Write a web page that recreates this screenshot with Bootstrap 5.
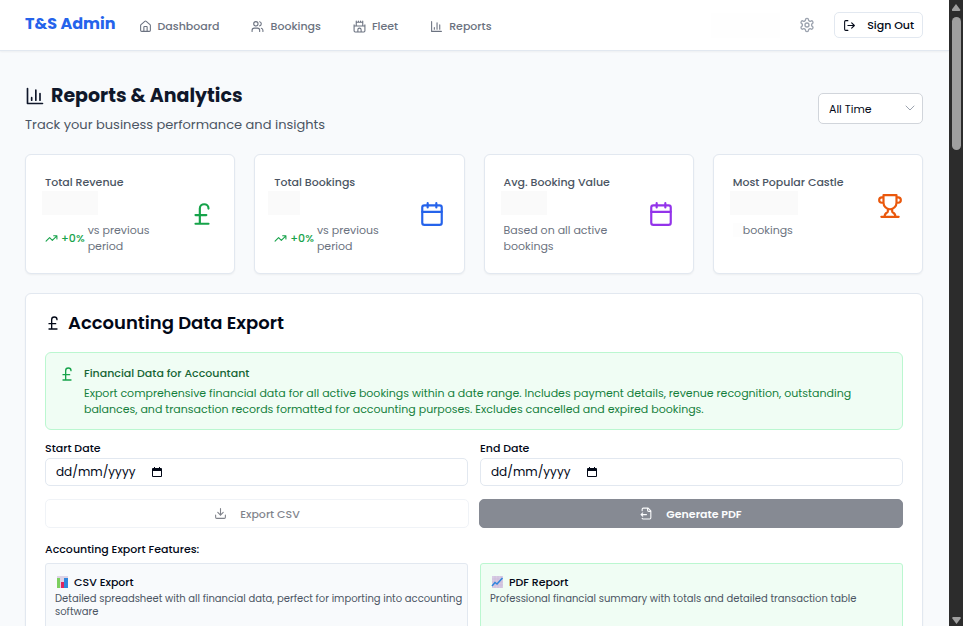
<!DOCTYPE html>
<html lang="en-GB">
<head>
<meta charset="utf-8">
<meta name="viewport" content="width=device-width, initial-scale=1">
<title>T&amp;S Admin – Reports &amp; Analytics</title>
<link href="https://cdn.jsdelivr.net/npm/bootstrap@5.3.0/dist/css/bootstrap.min.css" rel="stylesheet">
<style>
  body { font-family: Poppins, Inter, "Open Sans", sans-serif; font-size: 11px; line-height: 16px; color: #020817; background: #f8fafc; }
  .ico { width: 13px; height: 13px; flex: none; fill: none; stroke: currentColor; stroke-width: 2; stroke-linecap: round; stroke-linejoin: round; }
  .ico-16 { width: 16px; height: 16px; }
  .ico-20 { width: 20px; height: 20px; }
  .ico-26 { width: 26px; height: 26px; }
  .page-x { padding-left: 25px; padding-right: 26px; }
  .topbar { height: 51px; border-bottom: 1px solid #e2e8f0; box-shadow: 0 1px 2px rgba(0,0,0,.05); }
  .brand { font-size: 16px; line-height: 24px; color: #2563eb; padding-bottom: 3px; margin-right: 23px; }
  .menu { gap: 32px; padding-top: 2px; }
  .menu a { gap: 6px; color: #6b7280; }
  .account { gap: 19px; }
  .gear { color: #9ca3af; }
  .btn-plain { border: 1px solid #e2e8f0; background: #fff; font-size: 11px; line-height: 16px; padding: 4px 8px; border-radius: 5px; gap: 11px; color: #020817; }
  .hidden-value { background: #fafafa; height: 24px; width: 56px; margin: 1px 0 7px -3px; }
  .hidden-sm { width: 32px; margin-left: -6px; }
  .hidden-md { width: 46px; }
  .hidden-lg { width: 68px; }
  .hidden-count { width: 10px; height: 14px; background: #fdfdfd; }
  .hidden-user { width: 69px; height: 25px; background: #fefefe; }
  .headline { padding-top: 30px; padding-bottom: 19px; }
  .headline-text { padding-top: 2px; }
  .page-title { font-size: 19px; line-height: 26px; gap: 6px; color: #0f172a; }
  .subtitle { font-size: 13px; line-height: 20px; margin-top: 6px; color: #4b5563; }
  .period { width: 105px; height: 31px; font-size: 11px; line-height: 16px; padding: 6px 24px 4px 10px; border: 1px solid #d1d5db; border-radius: 5px; color: #020817; background-size: 12px 12px; background-position: right 6px center;
    background-image: url("data:image/svg+xml,%3Csvg xmlns='http://www.w3.org/2000/svg' viewBox='0 0 24 24' fill='none' stroke='%239ca3af' stroke-width='2' stroke-linecap='round' stroke-linejoin='round'%3E%3Cpath d='m4 8 8 8 8-8'/%3E%3C/svg%3E"); }
  .stats { display: grid; grid-template-columns: repeat(4, 1fr); gap: 19px; }
  .panel { background: #fff; border: 1px solid #e2e8f0; border-radius: 6px; box-shadow: 0 1px 2px rgba(0,0,0,.05); padding: 19px; }
  .stats .panel { column-gap: 12px; }
  .stat-label { color: #4b5563; }
  .muted { color: #6b7280; }
  .trend { gap: 3px; }
  .up { color: #16a34a; gap: 3px; }
  .c-green { color: #16a34a; } .c-blue { color: #2563eb; } .c-purple { color: #9333ea; } .c-orange { color: #ea580c; }
  .export { margin-top: 19px; }
  .section-title { font-size: 18px; line-height: 20px; gap: 7px; }
  .notice { background: #f0fdf4; border: 1px solid #bbf7d0; border-radius: 6px; padding: 12px 13px; margin-top: 19px; gap: 9px; color: #15803d; }
  .notice-icon { margin-top: 1px; }
  .notice h3 { color: #166534; font-size: 11px; line-height: 16px; margin: 0 0 4px; }
  .pair { display: grid; grid-template-columns: 1fr 1fr; gap: 12px; }
  .fields { margin-top: 10px; }
  .date-box { height: 28px; border: 1px solid #e2e8f0; border-radius: 5px; background: #fff; padding: 0 10px; margin-top: 2px; }
  .date-box input { width: 96px; border: 0; padding: 0; font-size: 12px; line-height: 18px; color: #020817; background: none; outline: 0; }
  .date-box input::placeholder { color: #020817; opacity: 1; }
  .date-box button { border: 0; padding: 0; background: none; line-height: 0; color: #020817; }
  .actions { gap: 10px; margin-top: 13px; }
  .act { height: 29px; font-size: 11px; line-height: 16px; border-radius: 5px; gap: 13px; padding: 0 8px; }
  .act:disabled { opacity: .5; }
  .act-light, .act-light:disabled { border: 1px solid #e2e8f0; background: #fff; color: #020817; }
  .act-dark, .act-dark:disabled { background: #0f172a; border-color: #0f172a; color: #f8fafc; }
  .sub-head { font-size: 11px; line-height: 16px; margin: 13px 0 6px; }
  .feature { border: 1px solid #e2e8f0; border-radius: 3px; background: #f8fafc; padding: 10px 4px 10px 9px; min-height: 90px; }
  .feature-green { border-color: #bbf7d0; background: #f0fdf4; }
  .feature h4 { font-size: 11px; line-height: 16px; margin: 0 0 2px; gap: 5px; }
  .feature p { font-size: 10px; line-height: 13px; color: #4b5563; margin: 0; }
  .emoji { width: 14px; height: 14px; }
  .scroller { width: 14px; flex: none; background: #2c2c2c; padding: 4px 2px 2px; }
  .arrow-up, .arrow-down { width: 9px; height: 7px; background: #9f9f9f; clip-path: polygon(50% 0, 100% 85%, 90% 100%, 10% 100%, 0 85%); }
  .arrow-down { transform: rotate(180deg); }
  .thumb { width: 9px; height: 133px; margin-top: 6px; background: #9f9f9f; border-radius: 5px; }
</style>
<script src="https://cdn.jsdelivr.net/npm/bootstrap@5.3.0/dist/js/bootstrap.bundle.min.js" defer></script>
</head>
<body>
<svg class="d-none" aria-hidden="true">
  <symbol id="i-home" viewBox="0 0 24 24"><path d="M15 21v-8a1 1 0 0 0-1-1h-4a1 1 0 0 0-1 1v8M3 10a2 2 0 0 1 .709-1.528l7-5.999a2 2 0 0 1 2.582 0l7 5.999A2 2 0 0 1 21 10v9a2 2 0 0 1-2 2H5a2 2 0 0 1-2-2z"/></symbol>
  <symbol id="i-users" viewBox="0 0 24 24"><path d="M16 21v-2a4 4 0 0 0-4-4H6a4 4 0 0 0-4 4v2M22 21v-2a4 4 0 0 0-3-3.87M16 3.13a4 4 0 0 1 0 7.75"/><circle cx="9" cy="7" r="4"/></symbol>
  <symbol id="i-castle" viewBox="0 0 24 24"><path d="M22 20v-9H2v9a2 2 0 0 0 2 2h16a2 2 0 0 0 2-2ZM18 11V4H6v7M15 22v-4a3 3 0 0 0-6 0v4M22 11V9M2 11V9M6 4V2M18 4V2M10 4V2M14 4V2"/></symbol>
  <symbol id="i-chart" viewBox="0 0 24 24"><path d="M3 3v18h18M18 17V9M13 17V5M8 17v-3"/></symbol>
  <symbol id="i-gear" viewBox="0 0 24 24"><path d="M12.22 2h-.44a2 2 0 0 0-2 2v.18a2 2 0 0 1-1 1.73l-.43.25a2 2 0 0 1-2 0l-.15-.08a2 2 0 0 0-2.73.73l-.22.38a2 2 0 0 0 .73 2.73l.15.1a2 2 0 0 1 1 1.72v.51a2 2 0 0 1-1 1.74l-.15.09a2 2 0 0 0-.73 2.73l.22.38a2 2 0 0 0 2.73.73l.15-.08a2 2 0 0 1 2 0l.43.25a2 2 0 0 1 1 1.73V20a2 2 0 0 0 2 2h.44a2 2 0 0 0 2-2v-.18a2 2 0 0 1 1-1.73l.43-.25a2 2 0 0 1 2 0l.15.08a2 2 0 0 0 2.73-.73l.22-.39a2 2 0 0 0-.73-2.73l-.15-.08a2 2 0 0 1-1-1.74v-.5a2 2 0 0 1 1-1.74l.15-.09a2 2 0 0 0 .73-2.73l-.22-.38a2 2 0 0 0-2.73-.73l-.15.08a2 2 0 0 1-2 0l-.43-.25a2 2 0 0 1-1-1.73V4a2 2 0 0 0-2-2z"/><circle cx="12" cy="12" r="3"/></symbol>
  <symbol id="i-logout" viewBox="0 0 24 24"><path d="M9 21H5a2 2 0 0 1-2-2V5a2 2 0 0 1 2-2h4M16 17l5-5-5-5M21 12H9"/></symbol>
  <symbol id="i-pound" viewBox="0 0 24 24"><path d="M18 7c0-5.333-8-5.333-8 0M10 7v14M6 21h12M6 13h10"/></symbol>
  <symbol id="i-calendar" viewBox="0 0 24 24"><rect x="3" y="4" width="18" height="18" rx="2"/><path d="M16 2v4M8 2v4M3 10h18"/></symbol>
  <symbol id="i-trophy" viewBox="0 0 24 24"><path d="M6 9H4.5a2.5 2.5 0 0 1 0-5H6M18 9h1.5a2.5 2.5 0 0 0 0-5H18M4 22h16M10 14.66V17c0 .55-.47.98-.97 1.21C7.85 18.75 7 20.24 7 22M14 14.66V17c0 .55.47.98.97 1.21C16.15 18.75 17 20.24 17 22M18 2H6v7a6 6 0 0 0 12 0V2Z"/></symbol>
  <symbol id="i-trend" viewBox="0 0 24 24"><path d="M22 7 13.5 15.5 8.5 10.5 2 17M16 7h6v6"/></symbol>
  <symbol id="i-download" viewBox="0 0 24 24"><path d="M21 15v4a2 2 0 0 1-2 2H5a2 2 0 0 1-2-2v-4M7 10l5 5 5-5M12 15V3"/></symbol>
  <symbol id="i-file" viewBox="0 0 24 24"><path d="M14 2v4a2 2 0 0 0 2 2h4M4 7V4a2 2 0 0 1 2-2h9l5 5v13a2 2 0 0 1-2 2H6a2 2 0 0 1-2-1M5 11l-3 3 3 3M2 14h10"/></symbol>
  <symbol id="i-picker" viewBox="0 0 10 10"><path fill="currentColor" stroke="none" fill-rule="evenodd" d="M1 1h1V0h1v1h4V0h1v1h1a1 1 0 0 1 1 1v7a1 1 0 0 1-1 1H1a1 1 0 0 1-1-1V2a1 1 0 0 1 1-1Zm0 3v5h8V4Z"/></symbol>
</svg>

<div class="d-flex vh-100 overflow-hidden">
  <div class="flex-grow-1 overflow-hidden">
    <header class="topbar bg-white page-x d-flex align-items-center">
      <a class="brand fw-bold text-decoration-none" href="#">T&amp;S Admin</a>
      <nav class="menu d-flex fw-medium">
        <a class="d-flex align-items-center text-decoration-none" href="#"><svg class="ico"><use href="#i-home"/></svg>Dashboard</a>
        <a class="d-flex align-items-center text-decoration-none" href="#"><svg class="ico"><use href="#i-users"/></svg>Bookings</a>
        <a class="d-flex align-items-center text-decoration-none" href="#"><svg class="ico"><use href="#i-castle"/></svg>Fleet</a>
        <a class="d-flex align-items-center text-decoration-none" href="#"><svg class="ico"><use href="#i-chart"/></svg>Reports</a>
      </nav>
      <div class="account d-flex align-items-center ms-auto">
        <span class="hidden-user"></span>
        <a class="gear d-flex" href="#" aria-label="Settings"><svg class="ico ico-16"><use href="#i-gear"/></svg></a>
        <button type="button" class="btn btn-plain fw-medium d-flex align-items-center"><svg class="ico"><use href="#i-logout"/></svg>Sign Out</button>
      </div>
    </header>

    <main class="page-x">
      <div class="headline d-flex justify-content-between align-items-center">
        <div class="headline-text">
          <h1 class="page-title fw-bold d-flex align-items-center m-0"><svg class="ico ico-20"><use href="#i-chart"/></svg>Reports &amp; Analytics</h1>
          <p class="subtitle mb-0">Track your business performance and insights</p>
        </div>
        <select class="form-select period" aria-label="Period"><option>All Time</option></select>
      </div>

      <section class="stats">
        <article class="panel d-flex justify-content-between align-items-start">
          <div>
            <div class="stat-label fw-medium">Total Revenue</div>
            <div class="hidden-value"></div>
            <div class="trend d-flex align-items-center"><span class="up d-flex align-items-center fw-medium"><svg class="ico"><use href="#i-trend"/></svg>+0%</span><span class="muted">vs previous period</span></div>
          </div>
          <svg class="ico ico-26 c-green align-self-center"><use href="#i-pound"/></svg>
        </article>
        <article class="panel d-flex justify-content-between align-items-start">
          <div>
            <div class="stat-label fw-medium">Total Bookings</div>
            <div class="hidden-value hidden-sm"></div>
            <div class="trend d-flex align-items-center"><span class="up d-flex align-items-center fw-medium"><svg class="ico"><use href="#i-trend"/></svg>+0%</span><span class="muted">vs previous period</span></div>
          </div>
          <svg class="ico ico-26 c-blue align-self-center"><use href="#i-calendar"/></svg>
        </article>
        <article class="panel d-flex justify-content-between align-items-start">
          <div>
            <div class="stat-label fw-medium">Avg. Booking Value</div>
            <div class="hidden-value hidden-md"></div>
            <div class="muted">Based on all active bookings</div>
          </div>
          <svg class="ico ico-26 c-purple align-self-center"><use href="#i-calendar"/></svg>
        </article>
        <article class="panel">
          <div class="d-flex justify-content-between align-items-center">
            <div>
              <div class="stat-label fw-medium">Most Popular Castle</div>
              <div class="hidden-value hidden-lg"></div>
              <div class="muted d-flex align-items-center"><span class="hidden-count"></span>bookings</div>
            </div>
            <svg class="ico ico-26 c-orange"><use href="#i-trophy"/></svg>
          </div>
        </article>
      </section>

      <section class="panel export">
        <h2 class="section-title fw-semibold d-flex align-items-center m-0"><svg class="ico ico-16"><use href="#i-pound"/></svg>Accounting Data Export</h2>
        <div class="notice d-flex align-items-start">
          <svg class="ico ico-16 c-green notice-icon"><use href="#i-pound"/></svg>
          <div>
            <h3 class="fw-medium">Financial Data for Accountant</h3>
            <div>Export comprehensive financial data for all active bookings within a date range. Includes payment details, revenue recognition, outstanding balances, and transaction records formatted for accounting purposes. Excludes cancelled and expired bookings.</div>
          </div>
        </div>

        <div class="pair fields">
          <div>
            <label class="fw-medium d-block" for="start">Start Date</label>
            <div class="date-box d-flex align-items-center"><input id="start" type="text" placeholder="dd/mm/yyyy"><button type="button" aria-label="Pick start date"><svg width="10" height="10"><use href="#i-picker"/></svg></button></div>
          </div>
          <div>
            <label class="fw-medium d-block" for="end">End Date</label>
            <div class="date-box d-flex align-items-center"><input id="end" type="text" placeholder="dd/mm/yyyy"><button type="button" aria-label="Pick end date"><svg width="10" height="10"><use href="#i-picker"/></svg></button></div>
          </div>
        </div>

        <div class="pair actions">
          <button type="button" class="btn act act-light fw-medium d-flex align-items-center justify-content-center" disabled><svg class="ico"><use href="#i-download"/></svg>Export CSV</button>
          <button type="button" class="btn act act-dark fw-semibold d-flex align-items-center justify-content-center" disabled><svg class="ico"><use href="#i-file"/></svg>Generate PDF</button>
        </div>

        <h3 class="sub-head fw-medium">Accounting Export Features:</h3>
        <div class="pair">
          <div class="feature">
            <h4 class="fw-medium d-flex align-items-center"><svg class="emoji" viewBox="0 0 14 14"><rect x="2" y="1" width="11" height="12" fill="#ddd3e6"/><rect x="2" y="3" width="3" height="10" fill="#7ccf5f"/><rect x="6" y="7" width="3" height="6" fill="#e0245e"/><rect x="9" y="3" width="4" height="10" fill="#2f86dd"/></svg>CSV Export</h4>
            <p>Detailed spreadsheet with all financial data, perfect for importing into accounting software</p>
          </div>
          <div class="feature feature-green">
            <h4 class="fw-medium d-flex align-items-center"><svg class="emoji" viewBox="0 0 14 14"><rect x="2" y="1" width="11" height="12" fill="#d8cce4"/><path d="M5 1v12M8 1v12M11 1v12M2 4h11M2 7h11M2 10h11" stroke="#c5b6d6" stroke-width=".5"/><path d="M2 11 5 7.5 7 9 12.5 3" fill="none" stroke="#2f86dd" stroke-width="1.5"/></svg>PDF Report</h4>
            <p>Professional financial summary with totals and detailed transaction table</p>
          </div>
        </div>
      </section>
    </main>
  </div>
  <div class="scroller d-flex flex-column align-items-center" aria-hidden="true">
    <span class="arrow-up"></span><span class="thumb"></span><span class="arrow-down mt-auto"></span>
  </div>
</div>
</body>
</html>
